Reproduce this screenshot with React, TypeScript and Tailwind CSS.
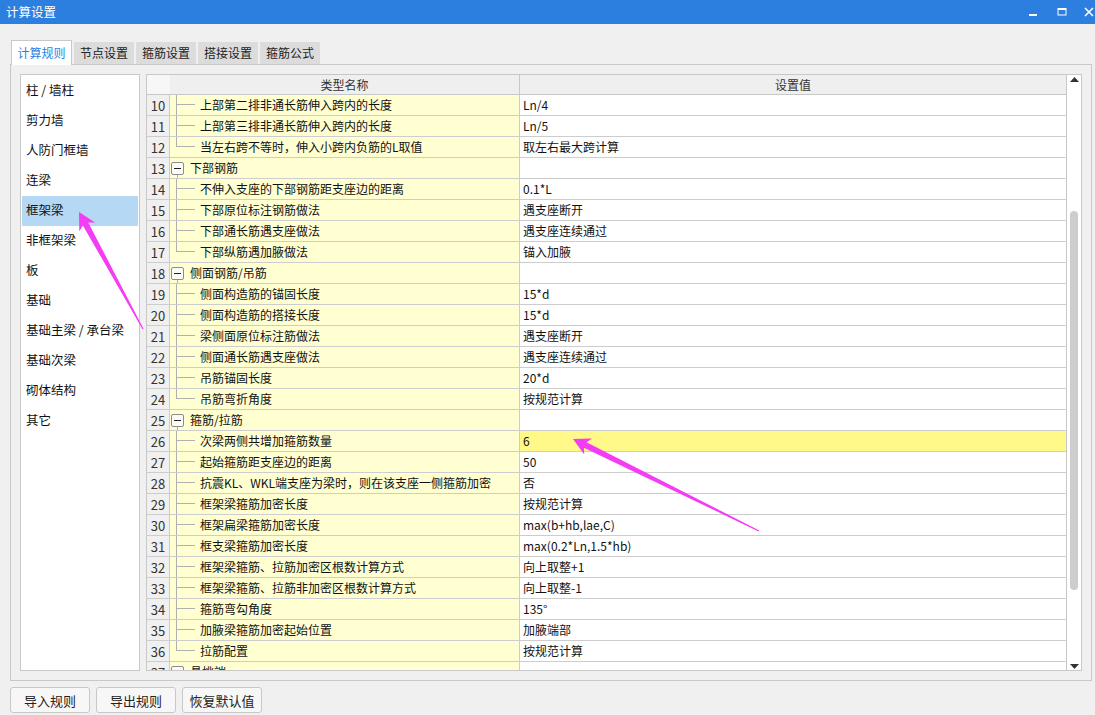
import React from "react";

type Row = {
  n: number;
  name: string;
  value?: string;
  type: "child" | "last" | "group";
  hl?: boolean;
};

const rows: Row[] = [
  { n: 10, name: "上部第二排非通长筋伸入跨内的长度", value: "Ln/4", type: "child" },
  { n: 11, name: "上部第三排非通长筋伸入跨内的长度", value: "Ln/5", type: "child" },
  { n: 12, name: "当左右跨不等时，伸入小跨内负筋的L取值", value: "取左右最大跨计算", type: "last" },
  { n: 13, name: "下部钢筋", type: "group" },
  { n: 14, name: "不伸入支座的下部钢筋距支座边的距离", value: "0.1*L", type: "child" },
  { n: 15, name: "下部原位标注钢筋做法", value: "遇支座断开", type: "child" },
  { n: 16, name: "下部通长筋遇支座做法", value: "遇支座连续通过", type: "child" },
  { n: 17, name: "下部纵筋遇加腋做法", value: "锚入加腋", type: "last" },
  { n: 18, name: "侧面钢筋/吊筋", type: "group" },
  { n: 19, name: "侧面构造筋的锚固长度", value: "15*d", type: "child" },
  { n: 20, name: "侧面构造筋的搭接长度", value: "15*d", type: "child" },
  { n: 21, name: "梁侧面原位标注筋做法", value: "遇支座断开", type: "child" },
  { n: 22, name: "侧面通长筋遇支座做法", value: "遇支座连续通过", type: "child" },
  { n: 23, name: "吊筋锚固长度", value: "20*d", type: "child" },
  { n: 24, name: "吊筋弯折角度", value: "按规范计算", type: "last" },
  { n: 25, name: "箍筋/拉筋", type: "group" },
  { n: 26, name: "次梁两侧共增加箍筋数量", value: "6", type: "child", hl: true },
  { n: 27, name: "起始箍筋距支座边的距离", value: "50", type: "child" },
  { n: 28, name: "抗震KL、WKL端支座为梁时，则在该支座一侧箍筋加密", value: "否", type: "child" },
  { n: 29, name: "框架梁箍筋加密长度", value: "按规范计算", type: "child" },
  { n: 30, name: "框架扁梁箍筋加密长度", value: "max(b+hb,lae,C)", type: "child" },
  { n: 31, name: "框支梁箍筋加密长度", value: "max(0.2*Ln,1.5*hb)", type: "child" },
  { n: 32, name: "框架梁箍筋、拉筋加密区根数计算方式", value: "向上取整+1", type: "child" },
  { n: 33, name: "框架梁箍筋、拉筋非加密区根数计算方式", value: "向上取整-1", type: "child" },
  { n: 34, name: "箍筋弯勾角度", value: "135°", type: "child" },
  { n: 35, name: "加腋梁箍筋加密起始位置", value: "加腋端部", type: "child" },
  { n: 36, name: "拉筋配置", value: "按规范计算", type: "last" },
  { n: 37, name: "悬挑端", type: "group" },
];

const leftItems = [
  "柱 / 墙柱",
  "剪力墙",
  "人防门框墙",
  "连梁",
  "框架梁",
  "非框架梁",
  "板",
  "基础",
  "基础主梁 / 承台梁",
  "基础次梁",
  "砌体结构",
  "其它",
];

function arrowPoints(
  T: [number, number],
  S: [number, number],
  L: number,
  W: number,
  neck: number,
  tail: number
) {
  const dx = T[0] - S[0];
  const dy = T[1] - S[1];
  const len = Math.hypot(dx, dy);
  const ux = dx / len;
  const uy = dy / len;
  const px = -uy;
  const py = ux;
  const bx = T[0] - ux * L;
  const by = T[1] - uy * L;
  const nx = T[0] - ux * L * 0.8;
  const ny = T[1] - uy * L * 0.8;
  const pts: [number, number][] = [
    T,
    [bx + px * W, by + py * W],
    [nx + px * neck, ny + py * neck],
    [S[0] + px * tail, S[1] + py * tail],
    [S[0] - px * tail, S[1] - py * tail],
    [nx - px * neck, ny - py * neck],
    [bx - px * W, by - py * W],
  ];
  return pts.map((p) => `${p[0].toFixed(1)},${p[1].toFixed(1)}`).join(" ");
}

function NameCell({ r }: { r: Row }) {
  if (r.type === "group") {
    return (
      <div className="flex h-full items-stretch pl-px">
        <div className="flex w-[13px] flex-col items-center">
          <div className="flex-1" />
          <div className="flex h-[13px] w-[13px] items-center justify-center rounded-[2px] border border-[#8c8c8c] bg-[#fbfbfb]">
            <div className="h-px w-[7px] bg-[#222]" />
          </div>
          <div className="flex flex-1 justify-center">
            <div className="h-full w-px bg-[#b0b0b0]" />
          </div>
        </div>
        <div className="ml-[6px] flex items-center text-[12px] leading-none text-[#111]">{r.name}</div>
      </div>
    );
  }
  return (
    <div className="flex h-full items-stretch pl-[6px]">
      <div className="flex w-[19px] flex-col">
        <div className="h-[10px] border-b border-l border-[#b0b0b0]" />
        {r.type === "last" ? (
          <div className="flex-1" />
        ) : (
          <div className="flex-1 border-l border-[#b0b0b0]" />
        )}
      </div>
      <div className="ml-[5px] flex items-center text-[12px] leading-none text-[#111]">{r.name}</div>
    </div>
  );
}

export default function App() {
  return (
    <div className="relative h-[715px] w-[1095px] overflow-hidden bg-[#f0f0f0] font-['Noto_Sans_CJK_SC','Microsoft_YaHei',sans-serif] text-[12px] text-[#111]">
      {/* Title bar */}
      <div className="flex h-[24px] items-center justify-between bg-[#2d7fdf] pl-[6px] text-white">
        <div className="text-[12.5px] leading-none">计算设置</div>
        <div className="flex items-center">
          <svg width="10" height="10" viewBox="0 0 10 10" className="mr-[19px] mt-[2px]">
            <rect x="1" y="6" width="8" height="2" fill="white" />
          </svg>
          <svg width="10" height="10" viewBox="0 0 10 10" className="mr-[17px]">
            <rect x="1" y="1.5" width="8" height="6.5" fill="none" stroke="white" strokeWidth="1" />
            <rect x="1" y="1" width="8" height="2" fill="white" />
          </svg>
          <svg width="10" height="10" viewBox="0 0 10 10" className="mr-[1px]">
            <path d="M1 1 L9 9 M9 1 L1 9" stroke="white" strokeWidth="1.6" />
          </svg>
        </div>
      </div>

      {/* Tabs */}
      <div className="mt-[16px] flex h-[24px] items-end gap-[2px] pl-[11px]">
        <div className="relative z-10 -mb-px flex h-[25px] w-[61px] items-center justify-center border border-b-0 border-[#c8c8c8] bg-white text-[12px] leading-none text-[#2d7fdf]">
          计算规则
        </div>
        {["节点设置", "箍筋设置", "搭接设置", "箍筋公式"].map((t) => (
          <div
            key={t}
            className="flex h-[22px] w-[60px] items-center justify-center bg-[#dcdcdc] text-[12px] leading-none text-[#222]"
          >
            {t}
          </div>
        ))}
      </div>

      {/* Panel */}
      <div className="ml-[10px] flex h-[617px] w-[1082px] gap-[6px] border border-[#c8c8c8] bg-[#f0f0f0] pl-[9px] pt-[9px]">
        {/* Left list */}
        <div className="h-[597px] w-[120px] border border-[#c8c8c8] bg-white pt-px">
          {leftItems.map((it, i) => (
            <div
              key={it}
              className={
                i === 4
                  ? "mx-px flex h-[30px] items-center bg-[#b5d8f4] pb-px pl-[4px] text-[12.5px] leading-none text-[#111]"
                  : "mx-px flex h-[30px] items-center pb-px pl-[4px] text-[12.5px] leading-none text-[#111]"
              }
            >
              {it}
            </div>
          ))}
        </div>

        {/* Table */}
        <div className="flex h-[597px] w-[936px] border border-[#c8c8c8] bg-white">
          <div className="flex min-w-0 flex-1 flex-col overflow-hidden">
            <div className="flex h-[20px] shrink-0 border-b border-[#c8c8c8]">
              <div className="w-[23px] bg-[#f7f7f7]" />
              <div className="flex w-[350px] items-center justify-center border-r border-[#c8c8c8] bg-[#efefef] text-[12px] leading-none text-[#333]">
                类型名称
              </div>
              <div className="flex flex-1 items-center justify-center bg-[#efefef] text-[12px] leading-none text-[#333]">
                设置值
              </div>
            </div>
            {rows.map((r) => (
              <div key={r.n} className="flex h-[21px] shrink-0 border-b border-[#cdcdcd]">
                <div className="flex w-[23px] items-center justify-center border-r border-[#cdcdcd] bg-[#f0f0f0] text-[13px] leading-none text-[#333]">
                  {r.n}
                </div>
                <div className="w-[350px] border-r border-[#cdcdcd] bg-[#ffffd2]">
                  <NameCell r={r} />
                </div>
                <div
                  className={
                    r.hl
                      ? "flex flex-1 items-center bg-[#fff98a] pl-[3px] text-[12px] leading-none text-[#111]"
                      : "flex flex-1 items-center bg-white pl-[3px] text-[12px] leading-none text-[#111]"
                  }
                >
                  {r.value ?? ""}
                </div>
              </div>
            ))}
          </div>
          {/* Scrollbar */}
          <div className="flex w-[15px] shrink-0 flex-col items-center border-l border-[#c8c8c8] bg-white pt-[2px]">
            <svg width="9" height="5" viewBox="0 0 9 5">
              <path d="M0 5 L4.5 0 L9 5 Z" fill="#333" />
            </svg>
            <div className="mt-[129px] h-[379px] w-[8px] rounded-full bg-[#cdcdcd]" />
            <div className="flex-1" />
            <svg width="9" height="5" viewBox="0 0 9 5" className="mb-[1px]">
              <path d="M0 0 L9 0 L4.5 5 Z" fill="#333" />
            </svg>
          </div>
        </div>
      </div>

      {/* Buttons */}
      <div className="mt-[6px] flex gap-[6px] pl-[10px]">
        {["导入规则", "导出规则", "恢复默认值"].map((b) => (
          <div
            key={b}
            className="flex h-[26px] w-[80px] items-center justify-center rounded-[3px] border border-[#c8c8c8] bg-[#f7f7f7] text-[13px] leading-none text-[#222]"
          >
            {b}
          </div>
        ))}
      </div>

      {/* Annotation arrows */}
      <svg className="pointer-events-none absolute left-0 top-0" width="1095" height="715">
        <polygon points={arrowPoints([79, 212], [143, 329], 17, 9, 3, 0.6)} fill="#f43cf4" />
        <polygon points={arrowPoints([573, 439], [759, 531], 17, 9, 3, 0.6)} fill="#f43cf4" />
      </svg>
    </div>
  );
}
